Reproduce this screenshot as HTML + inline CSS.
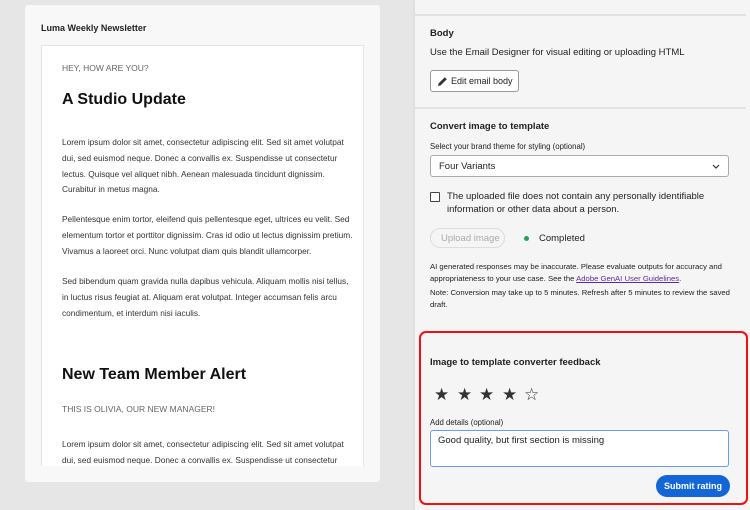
<!DOCTYPE html>
<html><head><style>
*{margin:0;padding:0;box-sizing:border-box}
body{width:750px;height:510px;background:#e6e6e6;font-family:"Liberation Sans",sans-serif;position:relative;overflow:hidden}
.card{position:absolute;left:25px;top:5px;width:355px;height:477px;background:#f8f8f8;border-radius:3px}
.ct{position:absolute;left:16px;top:18px;font-size:9px;font-weight:bold;color:#222}
.mail{position:absolute;left:16px;top:40px;width:323px;height:421px;background:#fff;border:1px solid #e4e4e4;border-bottom:none;overflow:hidden}
.mail .s{position:absolute;left:20px;font-size:8.5px;color:#666}
.mail h1{position:absolute;left:20px;font-size:16px;font-weight:bold;color:#111}
.mail p{position:absolute;left:20px;width:292px;font-size:8.3px;line-height:15.8px;color:#333}
.panel{position:absolute;left:413px;top:0;width:337px;height:510px;background:#f5f5f5;border-left:2px solid #e0e0e0}
.hr{position:absolute;left:0;width:331px;height:2px;background:#e2e2e2}
.t{position:absolute;left:15px;font-size:9.5px;color:#222}
.b{font-weight:bold}
.btn{position:absolute;border:1px solid #999;border-radius:3px;background:#fff;font-size:9.5px;color:#222;white-space:nowrap}
.sel{position:absolute;left:15px;top:155px;width:299px;height:22px;background:#fff;border:1px solid #aaa;border-radius:3px;font-size:9.5px;padding:5px 8px;color:#222}
.fb{position:absolute;left:4px;top:331px;width:329px;height:174px;border:2px solid #e11;border-radius:7px}
.star{position:absolute;top:385px;font-size:17px;color:#333}
</style></head><body>
<div class="card"><div class="ct">Luma Weekly Newsletter</div>
<div class="mail">
<div class="s" style="top:17px">HEY, HOW ARE YOU?</div>
<h1 style="top:45px">A Studio Update</h1>
<p style="top:89px">Lorem ipsum dolor sit amet, consectetur adipiscing elit. Sed sit amet volutpat dui, sed euismod neque. Donec a convallis ex. Suspendisse ut consectetur lectus. Quisque vel aliquet nibh. Aenean malesuada tincidunt dignissim. Curabitur in metus magna.</p>
<p style="top:166px">Pellentesque enim tortor, eleifend quis pellentesque eget, ultrices eu velit. Sed elementum tortor et porttitor dignissim. Cras id odio ut lectus dignissim pretium. Vivamus a laoreet orci. Nunc volutpat diam quis blandit ullamcorper.</p>
<p style="top:228px">Sed bibendum quam gravida nulla dapibus vehicula. Aliquam mollis nisi tellus, in luctus risus feugiat at. Aliquam erat volutpat. Integer accumsan felis arcu condimentum, et interdum nisi iaculis.</p>
<h1 style="top:320px">New Team Member Alert</h1>
<div class="s" style="top:358px">THIS IS OLIVIA, OUR NEW MANAGER!</div>
<p style="top:391px">Lorem ipsum dolor sit amet, consectetur adipiscing elit. Sed sit amet volutpat dui, sed euismod neque. Donec a convallis ex. Suspendisse ut consectetur</p>
</div></div>
<div class="panel">
<div class="hr" style="top:14px"></div>
<div class="t b" style="top:28px">Body</div>
<div class="t" style="top:47px">Use the Email Designer for visual editing or uploading HTML</div>
<div class="btn" style="left:15px;top:70px;width:89px;height:22px;padding:5px 0 0 20px;font-size:9px">Edit email body
<svg style="position:absolute;left:6px;top:5px" width="11" height="11" viewBox="0 0 11 11"><path d="M1 10l.6-2.6L7.8 1.2l2 2L3.6 9.4z" fill="#333"/></svg></div>
<div class="hr" style="top:107px"></div>
<div class="t b" style="top:121px">Convert image to template</div>
<div class="t" style="top:142px;font-size:7.8px">Select your brand theme for styling (optional)</div>
<div class="sel">Four Variants<svg style="position:absolute;right:8px;top:8px" width="8" height="5" viewBox="0 0 8 5"><path d="M1 1l3 3 3-3" stroke="#333" fill="none" stroke-width="1.2"/></svg></div>
<div style="position:absolute;left:15px;top:192px;width:10px;height:10px;border:1.3px solid #444;border-radius:1px;background:#fff"></div>
<div class="t" style="left:32px;top:191px;line-height:12.5px;width:280px">The uploaded file does not contain any personally identifiable information or other data about a person.</div>
<div class="btn" style="left:15px;top:228px;width:75px;height:20px;border-color:#ddd;color:#aaa;border-radius:10px;padding:4px 0 0 10px;background:#f5f5f5">Upload image</div>
<div style="position:absolute;left:109px;top:236px;width:5px;height:5px;border-radius:50%;background:#2d9d5c"></div>
<div class="t" style="left:124px;top:233px">Completed</div>
<div class="t" style="top:261px;font-size:7.7px;line-height:12px;width:300px">AI generated responses may be inaccurate. Please evaluate outputs for accuracy and appropriateness to your use case. See the <span style="color:#5a2ca0;text-decoration:underline">Adobe GenAI User Guidelines</span>.</div>
<div class="t" style="top:287px;font-size:7.7px;line-height:12px;width:300px">Note: Conversion may take up to 5 minutes. Refresh after 5 minutes to review the saved draft.</div>
<div class="fb"></div>
<div class="t b" style="top:357px">Image to template converter feedback</div>
<span class="star" style="left:19px">★</span><span class="star" style="left:42px">★</span><span class="star" style="left:64px">★</span><span class="star" style="left:87px">★</span><span class="star" style="left:109px">☆</span>
<div class="t" style="top:418px;font-size:7.8px">Add details (optional)</div>
<div style="position:absolute;left:15px;top:430px;width:299px;height:37px;background:#fff;border:1px solid #6b9ee8;border-radius:3px;font-size:9.5px;padding:4px 7px;color:#222">Good quality, but first section is missing</div>
<div style="position:absolute;left:241px;top:475px;width:74px;height:22px;background:#1366d6;border-radius:11px;color:#fff;font-size:9px;font-weight:bold;text-align:center;line-height:22px">Submit rating</div>
</div>
</body></html>
